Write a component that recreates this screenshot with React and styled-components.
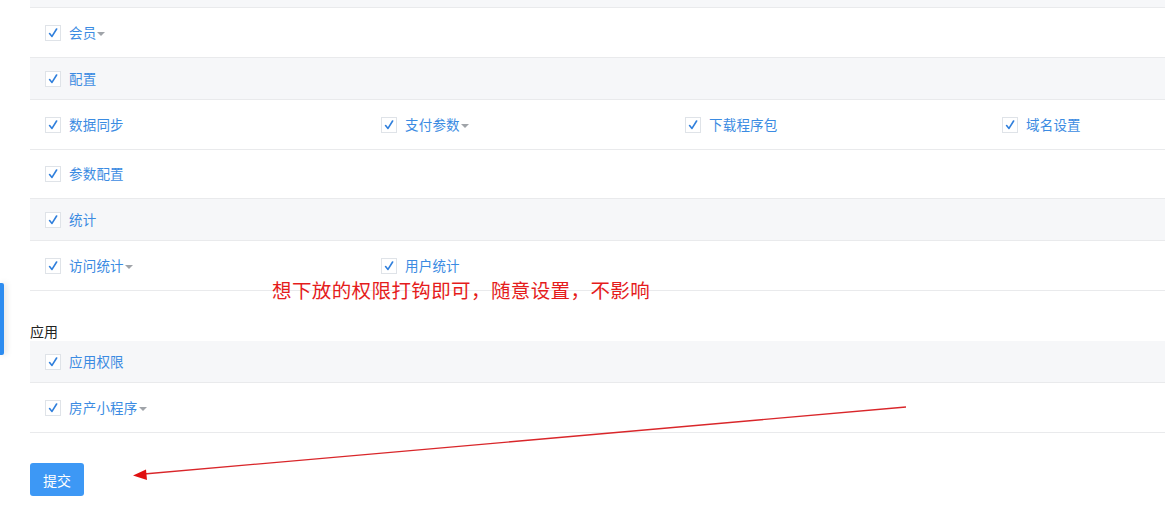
import React from 'react';
import styled, { createGlobalStyle } from 'styled-components';

const GlobalStyle = createGlobalStyle`
  html, body {
    margin: 0;
    padding: 0;
    background: #fff;
    overflow: hidden;
  }
  body {
    font-family: "Noto Sans CJK SC", "Liberation Sans", sans-serif;
    font-size: 14px;
    color: #333;
  }
`;

const Page = styled.div`
  position: relative;
  width: 1165px;
  height: 519px;
  overflow: hidden;
`;

const SideTab = styled.div`
  position: absolute;
  left: 0;
  top: 283px;
  width: 4px;
  height: 72px;
  background: #2d8cf0;
  border-radius: 0 2px 2px 0;
  box-shadow: 2px 0 6px rgba(0, 0, 0, 0.15);
`;

const Content = styled.div`
  padding-left: 30px;
`;

const Group = styled.div``;

const Row = styled.div`
  display: grid;
  grid-template-columns: 336px 304px 317px 1fr;
  align-items: center;
  padding-left: 15px;
  height: ${(p) => (p.$head ? '41px' : p.$short ? '48px' : '49px')};
  background: ${(p) => (p.$head ? '#f6f7f9' : '#fff')};
  border-bottom: 1px solid #e9eaec;
`;

const TopStrip = styled.div`
  height: 7px;
  background: #f6f7f9;
  border-bottom: 1px solid #e9eaec;
`;

const Item = styled.label`
  display: flex;
  align-items: center;
  gap: 8px;
  color: #3b8be2;
  font-size: 13.5px;
  line-height: 1;
  white-space: nowrap;
`;

const Label = styled.span`
  display: inline-flex;
  align-items: center;
  letter-spacing: 0.2px;
`;

const Box = styled.span`
  width: 14px;
  height: 14px;
  border: 1px solid #dfe3e8;
  background: #fff;
  display: flex;
  align-items: center;
  justify-content: center;
  flex-shrink: 0;
`;

const Caret = styled.span`
  display: inline-block;
  width: 0;
  height: 0;
  margin-left: 1px;
  margin-top: 2px;
  border-left: 4px solid transparent;
  border-right: 4px solid transparent;
  border-top: 4px solid #a0a4a9;
`;

const SectionTitle = styled.div`
  margin-top: 31px;
  height: 19px;
  line-height: 19px;
  font-size: 14px;
  color: #222;
`;

const SubmitButton = styled.button`
  margin-top: 30px;
  width: 54px;
  height: 33px;
  border: none;
  border-radius: 3px;
  background: #3d98f5;
  color: #fff;
  font-family: inherit;
  font-size: 14px;
  cursor: pointer;
`;

const Note = styled.div`
  position: absolute;
  left: 272px;
  top: 275px;
  color: #e51c1c;
  font-size: 19.5px;
  letter-spacing: 0.4px;
  white-space: nowrap;
`;

const ArrowLayer = styled.svg`
  position: absolute;
  left: 0;
  top: 0;
  pointer-events: none;
`;

const Check = () => (
  <svg width="10" height="10" viewBox="0 0 10 10">
    <path d="M1.6 5.6 L4 8.4 L8.6 1" fill="none" stroke="#2f7fdc" strokeWidth="1.6" strokeLinecap="round" strokeLinejoin="round" />
  </svg>
);

const Perm = ({ label, menu }) => (
  <Item>
    <Box>
      <Check />
    </Box>
    <Label>
      {label}
      {menu && <Caret />}
    </Label>
  </Item>
);

export default function App() {
  return (
    <Page>
      <GlobalStyle />
      <SideTab />
      <Content>
        <Group>
          <TopStrip />
          <Row>
            <Perm label="会员" menu />
          </Row>
        </Group>
        <Group>
          <Row $head>
            <Perm label="配置" />
          </Row>
          <Row>
            <Perm label="数据同步" />
            <Perm label="支付参数" menu />
            <Perm label="下载程序包" />
            <Perm label="域名设置" />
          </Row>
          <Row $short>
            <Perm label="参数配置" />
          </Row>
        </Group>
        <Group>
          <Row $head>
            <Perm label="统计" />
          </Row>
          <Row>
            <Perm label="访问统计" menu />
            <Perm label="用户统计" />
          </Row>
        </Group>
        <SectionTitle>应用</SectionTitle>
        <Group>
          <Row $head>
            <Perm label="应用权限" />
          </Row>
          <Row>
            <Perm label="房产小程序" menu />
          </Row>
        </Group>
        <SubmitButton>提交</SubmitButton>
      </Content>
      <Note>想下放的权限打钩即可，随意设置，不影响</Note>
      <ArrowLayer width="1165" height="519" viewBox="0 0 1165 519">
        <line x1="906" y1="407" x2="144" y2="474" stroke="#d9262a" strokeWidth="1.3" />
        <path d="M133 475.5 L146 469.5 L147 480 Z" fill="#e01010" />
      </ArrowLayer>
    </Page>
  );
}
